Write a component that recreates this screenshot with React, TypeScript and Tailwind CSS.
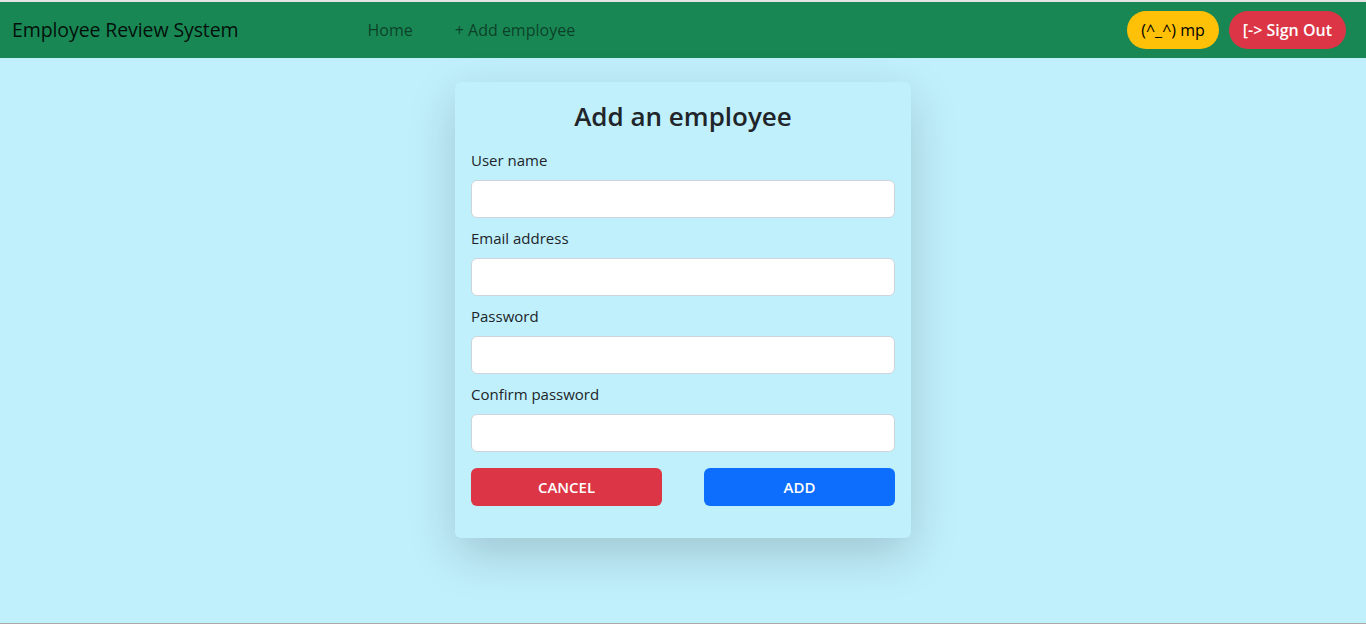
export default function App() {
  const fields = ['User name', 'Email address', 'Password', 'Confirm password'];

  return (
    <div
      className="flex flex-col h-screen bg-[#c0f0fc] border-t-2 border-[#e4e4e4] border-b border-b-[#a8a8a8] text-[#212529]"
      style={{ fontFamily: '"Open Sans", "Noto Sans", sans-serif' }}
    >
      {/* Navbar */}
      <nav className="flex items-center h-[56px] bg-[#198754] pl-3 pr-5">
        <span className="text-[19.5px] text-black/90 tracking-[-0.1px]">Employee Review System</span>
        <div className="flex items-center ml-[129px] gap-[42px] text-[16px] text-black/55">
          <span>Home</span>
          <span>+ Add employee</span>
        </div>
        <div className="flex items-center gap-[10px] ml-auto">
          <button className="h-[38px] px-[14px] rounded-full bg-[#ffc107] text-black text-[16px]">(^_^) mp</button>
          <button className="h-[38px] px-[14px] rounded-full bg-[#dc3545] text-white text-[16px] font-semibold">[-&gt; Sign Out</button>
        </div>
      </nav>

      {/* Content */}
      <main className="flex justify-center pt-[24px]">
        <div className="w-[456px] rounded-md bg-[#c0f0fc] shadow-[0_1rem_3rem_rgba(0,0,0,0.175)] px-4 pt-[17px] pb-[32px]">
          <h1 className="text-center text-[26px] font-semibold leading-[34px] mb-[15px]">Add an employee</h1>
          {fields.map((f) => (
            <div key={f} className="mb-2">
              <label className="block text-[15px] leading-6 mb-2">{f}</label>
              <input
                type={f.toLowerCase().includes('password') ? 'password' : 'text'}
                className="block w-full h-[38px] rounded-md border border-[#ced4da] bg-white px-3 outline-none"
              />
            </div>
          ))}
          <div className="flex justify-between mt-[16px]">
            <button className="w-[191px] h-[38px] rounded-md bg-[#dc3545] text-white text-[15px] font-semibold">CANCEL</button>
            <button className="w-[191px] h-[38px] rounded-md bg-[#0d6efd] text-white text-[15px] font-semibold">ADD</button>
          </div>
        </div>
      </main>
    </div>
  );
}
